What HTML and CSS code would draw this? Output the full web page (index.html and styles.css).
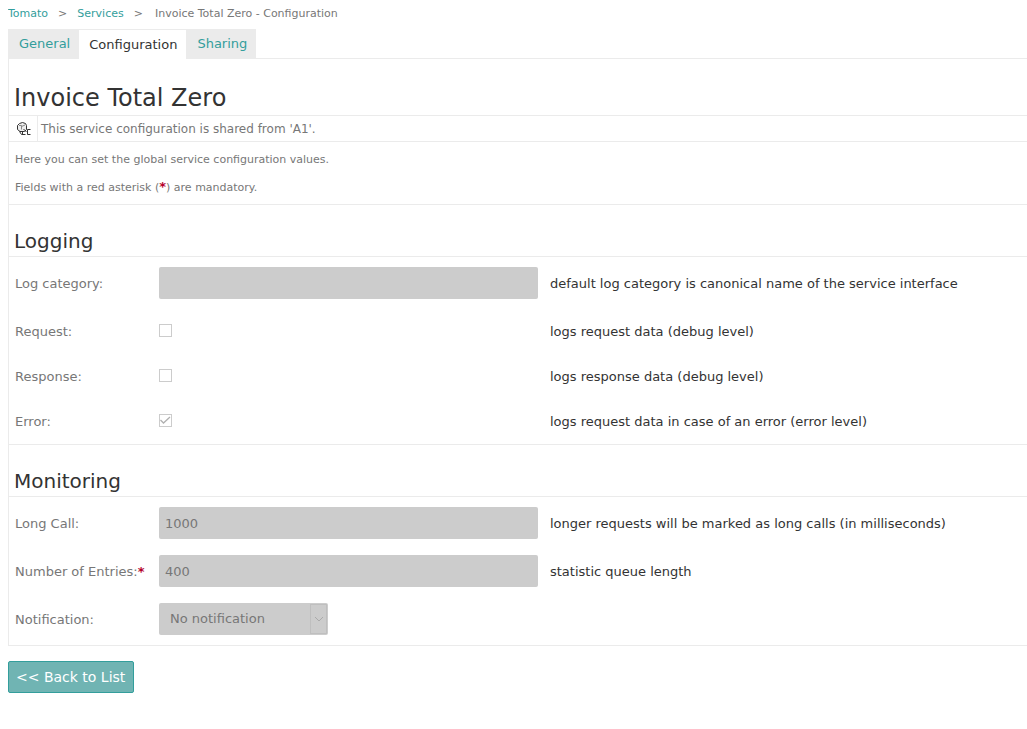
FILE: index.html
```html
<!DOCTYPE html>
<html lang="en">
<head>
<meta charset="utf-8">
<title>Invoice Total Zero - Configuration</title>
<link rel="stylesheet" href="styles.css">
</head>
<body>
<nav class="breadcrumb" aria-label="Breadcrumb">
  <a href="#">Tomato</a>
  <span class="separator">&gt;</span>
  <a href="#">Services</a>
  <span class="separator">&gt;</span>
  <span class="current">Invoice Total Zero - Configuration</span>
</nav>
<nav class="tabs" aria-label="Service">
  <a class="tab" href="#">General</a>
  <a class="tab tab-active" href="#" aria-current="page">Configuration</a>
  <a class="tab" href="#">Sharing</a>
</nav>
<main class="panel">
  <h1 class="title">Invoice Total Zero</h1>
  <div class="shared">
    <span class="shared-icon">
      <svg width="14" height="14" viewBox="0 0 14 14" fill="none" stroke="#333" aria-hidden="true">
        <path d="M.5 3.500 2.500 1.500 5.500.500 8.500 1.500 9.500 3.500V7.500L7.500 9.500H3L.5 7.500z" fill="#eee"/>
        <path d="M2 3.500H4.500V7.500M4.500 4.500 8 3" stroke="#888"/>
        <path d="M2.500 9.500 4.500 12.500H8.500M5.500 9.500V12M6.500 7 9.500 10M13.500 7.500H10.500V12.500H13.500" />
      </svg>
    </span>
    <span class="shared-text">This service configuration is shared from 'A1'.</span>
  </div>
  <div class="intro">
    <p>Here you can set the global service configuration values.</p>
    <p>Fields with a red asterisk (<b class="required">*</b>) are mandatory.</p>
  </div>
  <form>
    <section>
      <h2 class="heading">Logging</h2>
      <div class="fields">
        <div class="row">
          <label for="category">Log category:</label>
          <input class="text" id="category" type="text" disabled>
          <span class="hint">default log category is canonical name of the service interface</span>
        </div>
        <div class="row row-check">
          <label for="request">Request:</label>
          <input class="check" id="request" type="checkbox" disabled>
          <span class="hint">logs request data (debug level)</span>
        </div>
        <div class="row row-check">
          <label for="response">Response:</label>
          <input class="check" id="response" type="checkbox" disabled>
          <span class="hint">logs response data (debug level)</span>
        </div>
        <div class="row row-check">
          <label for="error">Error:</label>
          <span class="check-box">
            <input class="check" id="error" type="checkbox" checked disabled>
            <svg class="tick" width="13" height="13" viewBox="0 0 13 13" fill="none" stroke="#b0b0b0" stroke-width="1.300" aria-hidden="true"><path d="M1.500 6 4.500 9 11 3"/></svg>
          </span>
          <span class="hint">logs request data in case of an error (error level)</span>
        </div>
      </div>
    </section>
    <section>
      <h2 class="heading">Monitoring</h2>
      <div class="fields">
        <div class="row">
          <label for="longcall">Long Call:</label>
          <input class="text" id="longcall" type="text" value="1000" disabled>
          <span class="hint">longer requests will be marked as long calls (in milliseconds)</span>
        </div>
        <div class="row">
          <label for="entries">Number of Entries:<b class="required">*</b></label>
          <input class="text" id="entries" type="text" value="400" disabled>
          <span class="hint">statistic queue length</span>
        </div>
        <div class="row">
          <label for="notification">Notification:</label>
          <span class="select-box">
            <select class="select" id="notification" disabled><option>No notification</option></select>
            <span class="arrow"><svg width="10" height="6" viewBox="0 0 10 6" fill="none" stroke="#aaa" aria-hidden="true"><path d="M1 1 5 5 9 1"/></svg></span>
          </span>
        </div>
      </div>
    </section>
  </form>
</main>
<button class="back" type="button">&lt;&lt; Back to List</button>
</body>
</html>
```
FILE: styles.css
```css
* {
  box-sizing: border-box;
}

body {
  margin: 0 0 0 8px;
  background: #fff;
  color: #777;
  font-family: Verdana, "DejaVu Sans", sans-serif;
  font-size: 13px;
  line-height: 16px;
}

a {
  color: #339e9c;
  text-decoration: none;
}

.breadcrumb {
  display: flex;
  padding: 6px 0 7px;
  font-size: 11px;
}

.separator {
  padding: 0 10px;
}

.current {
  padding-left: 2px;
}

.tabs {
  display: flex;
  border-bottom: 1px solid #ebebeb;
}

.tab {
  padding: 7px 9px 6px 11px;
  background: #ebebeb;
}

.tab-active {
  margin-bottom: -1px;
  padding: 7px 9px 6px 10px;
  border-top: 1px solid #ebebeb;
  background: #fff;
  color: #333;
}

.panel {
  border-left: 1px solid #ebebeb;
}

.title,
.heading {
  margin: 0;
  border-bottom: 1px solid #ebebeb;
  color: #333;
  font-weight: normal;
}

.title {
  padding: 24px 5px 2px;
  font-size: 24px;
  line-height: 30px;
}

.heading {
  padding: 24px 5px 3px;
  font-size: 20px;
  line-height: 24px;
}

.shared {
  display: flex;
  border-bottom: 1px solid #ebebeb;
}

.shared-icon {
  display: flex;
  align-items: center;
  padding: 0 6px 0 8px;
  border-right: 1px solid #ebebeb;
}

.shared-text {
  padding: 5px 3px 4px;
  font-size: 12px;
}

.intro {
  padding: 10px 6px 8px;
  border-bottom: 1px solid #ebebeb;
  font-size: 11px;
}

.intro p {
  margin: 0;
}

.intro p + p {
  margin-top: 12px;
}

.required {
  color: #b5002a;
  font-size: 13px;
  line-height: 1;
}

.fields {
  display: grid;
  gap: 16px;
  padding: 10px 6px;
  border-bottom: 1px solid #ebebeb;
}

.row {
  display: grid;
  grid-template-columns: 144px 379px 1fr;
  align-items: center;
  min-height: 32px;
}

.row label {
  padding-top: 2px;
}

.row-check {
  min-height: 29px;
  padding-top: 2px;
}

.hint {
  padding: 2px 0 0 12px;
  color: #333;
}

.text,
.select {
  height: 32px;
  margin: 0;
  border: 0;
  border-radius: 2px;
  background: #ccc;
  color: #777;
  font: inherit;
  opacity: 1;
}

.text {
  width: 100%;
  padding: 0 6px;
}

.check {
  appearance: none;
  display: block;
  width: 13px;
  height: 13px;
  margin: 0;
  border: 1px solid #ccc;
  background: #fff;
}

.check-box,
.select-box {
  position: relative;
  justify-self: start;
}

.tick {
  position: absolute;
  top: 0;
  left: 0;
}

.select {
  appearance: none;
  display: block;
  width: 169px;
  padding: 0 20px 0 11px;
}

.arrow {
  position: absolute;
  top: 1px;
  right: 1px;
  bottom: 1px;
  display: flex;
  align-items: center;
  justify-content: center;
  width: 17px;
  border: 1px solid #bfbfbf;
  pointer-events: none;
}

.back {
  height: 32px;
  margin: 15px 0 0;
  padding: 0 8px 0 7px;
  border: 1px solid #339e9c;
  border-radius: 2px;
  background: #70b4b3;
  color: #fff;
  font: inherit;
  font-size: 14px;
}
```
